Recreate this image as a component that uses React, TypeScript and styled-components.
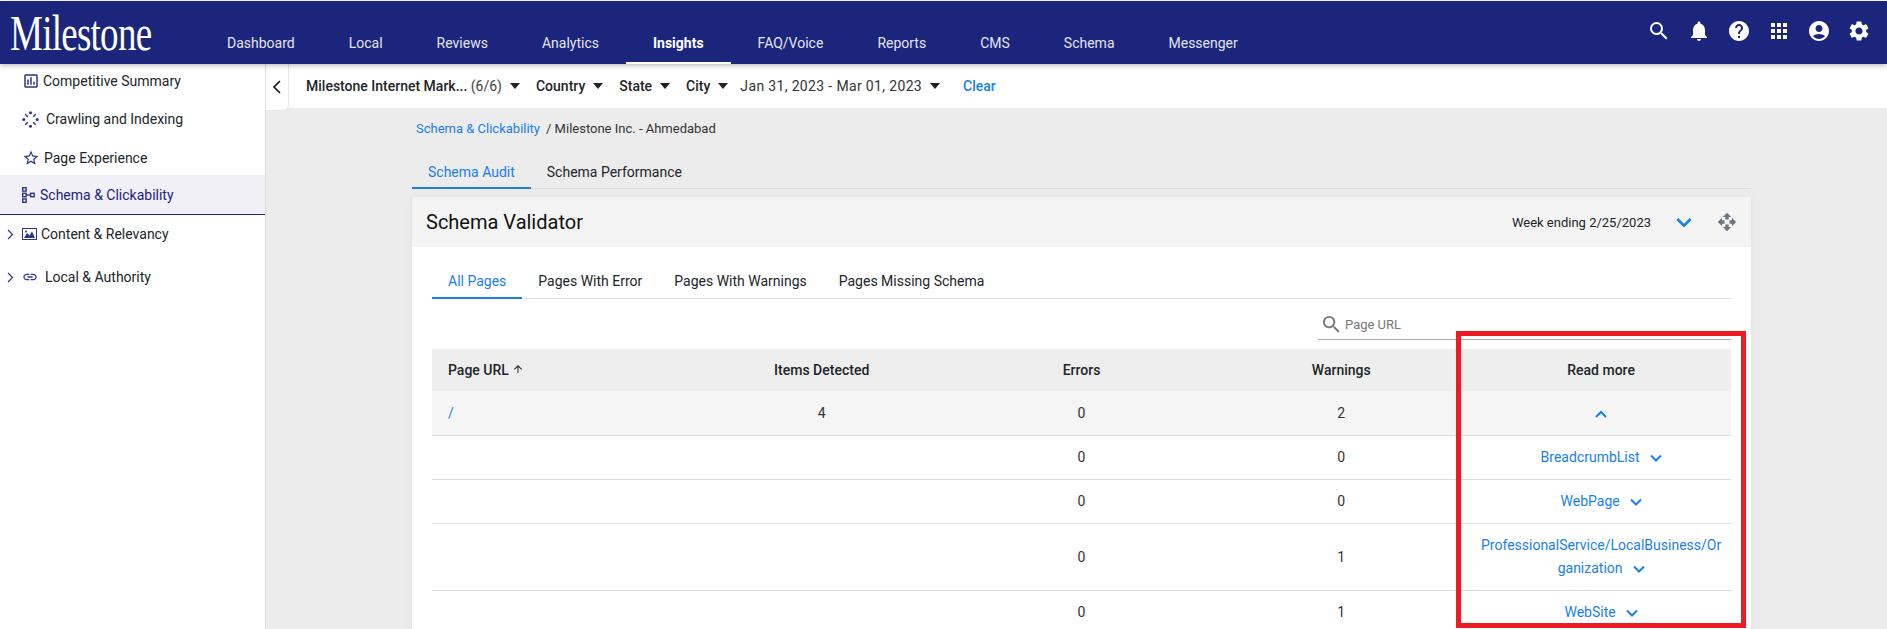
import React from "react";
import styled, { createGlobalStyle } from "styled-components";
import {
  MdSearch,
  MdNotifications,
  MdHelp,
  MdApps,
  MdAccountCircle,
  MdSettings,
  MdOutlineAssessment,
  MdStarBorder,
  MdLink,
  MdOpenWith,
  MdArrowUpward,
} from "react-icons/md";

const navItems = ["Dashboard", "Local", "Reviews", "Analytics", "Insights", "FAQ/Voice", "Reports", "CMS", "Schema", "Messenger"];
const headerIcons = [MdSearch, MdNotifications, MdHelp, MdApps, MdAccountCircle, MdSettings];
const innerTabs = ["All Pages", "Pages With Error", "Pages With Warnings", "Pages Missing Schema"];
const rows = [
  { errors: 0, warnings: 0, type: "BreadcrumbList" },
  { errors: 0, warnings: 0, type: "WebPage" },
  { errors: 0, warnings: 1, type: "ProfessionalService/LocalBusiness/Organization" },
  { errors: 0, warnings: 1, type: "WebSite" },
];

const Chevron = ({ up, size = 12 }: { up?: boolean; size?: number }) => (
  <svg width={size} height={(size * 2) / 3} viewBox="0 0 12 8" fill="none" stroke="#1a7fe8" strokeWidth="2">
    <path d={up ? "M1 7l5-5 5 5" : "M1 1.5l5 5 5-5"} />
  </svg>
);

const Caret = () => (
  <CaretBox width="10" height="6" viewBox="0 0 10 6">
    <path d="M0 0h10L5 6z" fill="#222" />
  </CaretBox>
);

const CrawlIcon = () => (
  <svg width="17" height="17" viewBox="0 0 17 17" fill="#2b3687">
    <circle cx="8.5" cy="1.8" r="1.5" />
    <circle cx="8.5" cy="15.2" r="1.5" />
    <circle cx="1.8" cy="8.5" r="1.5" />
    <circle cx="15.2" cy="8.5" r="1.5" />
    <path d="M3.2 3.2l2.6 2.6M13.8 3.2l-2.6 2.6M3.2 13.8l2.6-2.6M13.8 13.8l-2.6-2.6" stroke="#2b3687" strokeWidth="1.4" />
  </svg>
);

const SchemaIcon = () => (
  <svg width="13" height="16" viewBox="0 0 13 16" fill="none" stroke="#2b3687" strokeWidth="1.4">
    <rect x="0.7" y="0.7" width="3.4" height="3.4" />
    <rect x="0.7" y="6.3" width="3.4" height="3.4" />
    <rect x="0.7" y="11.9" width="3.4" height="3.4" />
    <rect x="8.6" y="6.3" width="3.6" height="3.4" />
    <path d="M4.1 8h4.5" />
  </svg>
);

const ImageIcon = () => (
  <svg width="15" height="12" viewBox="0 0 15 12" fill="none">
    <rect x="0.5" y="0.5" width="14" height="11" stroke="#2b3687" />
    <path d="M2 10l3-5 2.5 2.5L10 3.5l3 6.5z" fill="#2b3687" />
    <circle cx="4" cy="3.6" r="1" fill="#2b3687" />
  </svg>
);

const SmallArrow = () => (
  <svg width="7" height="11" viewBox="0 0 7 11" fill="none" stroke="#2b3687" strokeWidth="1.2">
    <path d="M1 1l4.5 4.5L1 10" />
  </svg>
);

const App: React.FC = () => {
  return (
    <Page>
      <GlobalStyle />
      <Header>
        <LogoBox>
          <LogoText>Milestone</LogoText>
        </LogoBox>
        <Nav>
          {navItems.map((item) => (
            <NavItem key={item} $active={item === "Insights"}>
              {item}
            </NavItem>
          ))}
        </Nav>
        <HeaderIcons>
          {headerIcons.map((Icon, i) => (
            <HeaderIcon key={i}>
              <Icon size={24} color="#fff" />
            </HeaderIcon>
          ))}
        </HeaderIcons>
      </Header>
      <Body>
        <Sidebar>
          <SideRow $h={34}>
            <SideIcon $gap={3}>
              <MdOutlineAssessment size={18} color="#2b3687" />
            </SideIcon>
            Competitive Summary
          </SideRow>
          <SideRow $h={42}>
            <SideIcon $gap={7}>
              <CrawlIcon />
            </SideIcon>
            Crawling and Indexing
          </SideRow>
          <SideRow $h={35}>
            <SideIcon $gap={4}>
              <MdStarBorder size={18} color="#2b3687" />
            </SideIcon>
            Page Experience
          </SideRow>
          <SideRow $h={40} $selected>
            <SideIcon $gap={5}>
              <SchemaIcon />
            </SideIcon>
            Schema &amp; Clickability
          </SideRow>
          <SideRow $h={38} $nested>
            <SideArrow>
              <SmallArrow />
            </SideArrow>
            <SideIcon $gap={4}>
              <ImageIcon />
            </SideIcon>
            Content &amp; Relevancy
          </SideRow>
          <SideRow $h={48} $nested>
            <SideArrow>
              <SmallArrow />
            </SideArrow>
            <SideIcon $gap={7}>
              <MdLink size={16} color="#2b3687" />
            </SideIcon>
            Local &amp; Authority
          </SideRow>
        </Sidebar>
        <Main>
          <FilterBar>
            <CollapseTab>
              <svg width="9" height="14" viewBox="0 0 9 14" fill="none" stroke="#111" strokeWidth="1.6">
                <path d="M8 1L2 7l6 6" />
              </svg>
            </CollapseTab>
            <FilterGroup>
              <FilterItem $strong>
                Milestone Internet Mark... <FilterCount>(6/6)</FilterCount>
                <Caret />
              </FilterItem>
              <FilterItem $strong>
                Country
                <Caret />
              </FilterItem>
              <FilterItem $strong>
                State
                <Caret />
              </FilterItem>
              <FilterItem $strong>
                City
                <Caret />
              </FilterItem>
              <DateItem>
                Jan 31, 2023 - Mar 01, 2023
                <Caret />
              </DateItem>
              <ClearLink>Clear</ClearLink>
            </FilterGroup>
          </FilterBar>
          <Content>
            <Breadcrumb>
              <BlueText>Schema &amp; Clickability</BlueText>
              <CrumbRest>/ Milestone Inc. - Ahmedabad</CrumbRest>
            </Breadcrumb>
            <TopTabs>
              <TopTab $active>Schema Audit</TopTab>
              <TopTab>Schema Performance</TopTab>
            </TopTabs>
            <Card>
              <CardHeader>
                <CardTitle>Schema Validator</CardTitle>
                <CardTools>
                  <WeekText>Week ending 2/25/2023</WeekText>
                  <Chevron size={16} />
                  <MdOpenWith size={20} color="#6c757d" />
                </CardTools>
              </CardHeader>
              <CardBody>
                <InnerTabs>
                  {innerTabs.map((tab, i) => (
                    <InnerTab key={tab} $active={i === 0}>
                      {tab}
                    </InnerTab>
                  ))}
                </InnerTabs>
                <SearchRow>
                  <SearchField>
                    <MdSearch size={23} color="#777" />
                    <SearchText>Page URL</SearchText>
                  </SearchField>
                </SearchRow>
                <Table>
                  <thead>
                    <tr>
                      <HeadCell $left>
                        Page URL <MdArrowUpward size={12} />
                      </HeadCell>
                      <HeadCell>Items Detected</HeadCell>
                      <HeadCell>Errors</HeadCell>
                      <HeadCell>Warnings</HeadCell>
                      <HeadCell>Read more</HeadCell>
                    </tr>
                  </thead>
                  <tbody>
                    <OpenRow>
                      <Cell $left>
                        <BlueText>/</BlueText>
                      </Cell>
                      <Cell>4</Cell>
                      <Cell>0</Cell>
                      <Cell>2</Cell>
                      <Cell>
                        <Chevron up />
                      </Cell>
                    </OpenRow>
                    {rows.map((row) => (
                      <tr key={row.type}>
                        <Cell $left />
                        <Cell />
                        <Cell>{row.errors}</Cell>
                        <Cell>{row.warnings}</Cell>
                        <ReadCell>
                          {row.type}
                          <ReadArrow>
                            <Chevron />
                          </ReadArrow>
                        </ReadCell>
                      </tr>
                    ))}
                  </tbody>
                </Table>
              </CardBody>
            </Card>
          </Content>
        </Main>
      </Body>
      <Highlight />
    </Page>
  );
};
export default App;

const GlobalStyle = createGlobalStyle`
  html, body {
    margin: 0;
    height: 100%;
    overflow: hidden;
    background: #fff;
  }
  * {
    box-sizing: border-box;
  }
`;

const Page = styled.div`
  position: relative;
  height: 629px;
  overflow: hidden;
  padding-top: 1px;
  font-family: Roboto, "Liberation Sans", sans-serif;
  font-size: 14px;
  color: #212529;
`;

const Header = styled.header`
  position: relative;
  z-index: 2;
  display: flex;
  height: 63px;
  background: #1b257c;
  box-shadow: 0 2px 5px rgba(0, 0, 0, 0.25);
`;

const LogoBox = styled.div`
  width: 200px;
  padding: 7px 0 0 10px;
`;

const LogoText = styled.div`
  font-family: "Liberation Serif", serif;
  font-size: 50px;
  line-height: 50px;
  color: #fff;
  letter-spacing: -1px;
  transform: scaleX(0.74);
  transform-origin: left center;
`;

const Nav = styled.nav`
  display: flex;
  align-items: flex-end;
`;

const NavItem = styled.div<{ $active?: boolean }>`
  height: 40px;
  padding: 0 27px;
  line-height: 38px;
  color: #fff;
  opacity: ${(p) => (p.$active ? 1 : 0.88)};
  font-weight: ${(p) => (p.$active ? 700 : 400)};
  border-bottom: 2px solid ${(p) => (p.$active ? "#fff" : "transparent")};
`;

const HeaderIcons = styled.div`
  display: flex;
  align-items: center;
  margin-left: auto;
  padding: 0 8px 0 0;
  height: 64px;
  margin-top: -2px;
`;

const HeaderIcon = styled.div`
  display: flex;
  justify-content: center;
  width: 40px;
`;

const Body = styled.div`
  display: flex;
  height: 565px;
`;

const Sidebar = styled.aside`
  flex: none;
  width: 266px;
  border-right: 1px solid #ddd;
  background: #fff;
`;

const SideRow = styled.div<{ $h: number; $selected?: boolean; $nested?: boolean }>`
  display: flex;
  align-items: center;
  height: ${(p) => p.$h}px;
  padding-left: ${(p) => (p.$nested ? 7 : 22)}px;
  color: ${(p) => (p.$selected ? "#1b257c" : "#212529")};
  background: ${(p) => (p.$selected ? "#f0f0f6" : "transparent")};
  border-bottom: ${(p) => (p.$selected ? "1px solid #1b257c" : "none")};
`;

const SideIcon = styled.span<{ $gap: number }>`
  display: inline-flex;
  margin-right: ${(p) => p.$gap}px;
`;

const SideArrow = styled.span`
  display: inline-flex;
  width: 15px;
`;

const Main = styled.main`
  flex: 1;
  min-width: 0;
  background: #ececec;
`;

const FilterBar = styled.div`
  display: flex;
  height: 44px;
  background: #fff;
`;

const CollapseTab = styled.div`
  display: flex;
  align-items: center;
  justify-content: center;
  flex: none;
  width: 23px;
  height: 47px;
  padding-right: 2px;
  background: #fff;
  border: 1px solid #e6e6e6;
  border-width: 0 1px 1px 0;
  border-radius: 0 0 6px 0;
`;

const FilterGroup = styled.div`
  display: flex;
  align-items: center;
  padding-left: 17px;
  font-size: 14px;
`;

const FilterItem = styled.div<{ $strong?: boolean }>`
  display: flex;
  align-items: center;
  margin-right: 16px;
  font-weight: 500;
  white-space: pre;
`;

const FilterCount = styled.span`
  font-weight: 400;
  color: #444;
`;

const DateItem = styled.div`
  display: flex;
  align-items: center;
  margin: 0 23px 0 -4px;
  color: #333;
  letter-spacing: 0.35px;
`;

const CaretBox = styled.svg`
  margin-left: 8px;
`;

const ClearLink = styled.div`
  color: #1a7fe8;
  font-weight: 500;
`;

const Content = styled.div`
  padding: 0 136px 0 146px;
`;

const Breadcrumb = styled.div`
  display: flex;
  height: 36px;
  padding: 13px 0 0 4px;
  font-size: 13px;
  line-height: 16px;
`;

const BlueText = styled.span`
  color: #1a7fe8;
`;

const CrumbRest = styled.span`
  margin-left: 6px;
  color: #333;
`;

const TopTabs = styled.div`
  display: flex;
  height: 45px;
  padding-top: 15px;
  border-bottom: 1px solid #ddd;
`;

const TopTab = styled.div<{ $active?: boolean }>`
  height: 30px;
  padding: 0 16px;
  line-height: 27px;
  color: ${(p) => (p.$active ? "#1a7fe8" : "#212529")};
  border-bottom: 2px solid ${(p) => (p.$active ? "#1a7fe8" : "transparent")};
`;

const Card = styled.section`
  margin-top: 8px;
  background: #fff;
  border-radius: 4px 4px 0 0;
  box-shadow: 0 0 8px rgba(0, 0, 0, 0.05);
`;

const CardHeader = styled.div`
  display: flex;
  align-items: center;
  justify-content: space-between;
  height: 50px;
  padding: 0 14px;
  background: #f4f4f4;
  border-radius: 4px 4px 0 0;
`;

const CardTitle = styled.div`
  font-size: 20px;
  color: #111;
`;

const CardTools = styled.div`
  display: flex;
  align-items: center;
  gap: 25px;
`;

const WeekText = styled.div`
  font-size: 13px;
  margin-right: 0;
`;

const CardBody = styled.div`
  padding: 0 20px;
`;

const InnerTabs = styled.div`
  display: flex;
  height: 52px;
  padding-top: 20px;
  border-bottom: 1px solid #ddd;
`;

const InnerTab = styled.div<{ $active?: boolean }>`
  height: 32px;
  padding: 0 16px;
  line-height: 28px;
  color: ${(p) => (p.$active ? "#1a7fe8" : "#212529")};
  border-bottom: 2px solid ${(p) => (p.$active ? "#1a7fe8" : "transparent")};
`;

const SearchRow = styled.div`
  display: flex;
  justify-content: flex-end;
  height: 50px;
  padding-top: 10px;
`;

const SearchField = styled.div`
  display: flex;
  align-items: center;
  width: 413px;
  height: 31px;
  padding-left: 2px;
  gap: 2px;
  border-bottom: 1px solid #aaa;
`;

const SearchText = styled.span`
  font-size: 13px;
  color: #777;
`;

const Table = styled.table`
  width: 100%;
  table-layout: fixed;
  border-collapse: collapse;
`;

const HeadCell = styled.th<{ $left?: boolean }>`
  height: 42px;
  padding: 0 ${(p) => (p.$left ? 16 : 6)}px;
  background: #eee;
  font-weight: 500;
  text-align: ${(p) => (p.$left ? "left" : "center")};
  color: #212529;
`;

const OpenRow = styled.tr`
  background: #f5f5f5;
`;

const Cell = styled.td<{ $left?: boolean }>`
  height: 44px;
  padding: 0 ${(p) => (p.$left ? 16 : 6)}px;
  text-align: ${(p) => (p.$left ? "left" : "center")};
  border-bottom: 1px solid #ddd;
  color: #333;
`;

const ReadCell = styled.td`
  height: 44px;
  padding: 10px 6px;
  text-align: center;
  line-height: 23px;
  color: #1a7fe8;
  word-break: break-all;
  border-bottom: 1px solid #ddd;
`;

const ReadArrow = styled.span`
  margin-left: 10px;
`;

const Highlight = styled.div`
  position: absolute;
  left: 1456px;
  top: 331px;
  width: 290px;
  height: 297px;
  border: 5px solid #ed1c24;
  pointer-events: none;
`;
